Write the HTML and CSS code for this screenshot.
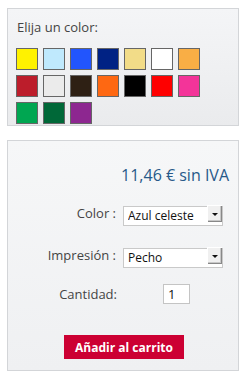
FILE: index.html
```html
<!DOCTYPE html>
<html lang="es">
<head>
  <meta charset="UTF-8" />
  <meta name="viewport" content="width=device-width, initial-scale=1.0"/>
  <title>Elija un color</title>
  <link rel="stylesheet" href="styles.css">
</head>
<body>
  <div class="panel colors">
    <div class="colors-title">Elija un color:</div>
    <div class="swatches">
      <span class="swatch" style="background:#fff200"></span>
      <span class="swatch" style="background:#bfe9fd"></span>
      <span class="swatch" style="background:#2255fd"></span>
      <span class="swatch" style="background:#002284"></span>
      <span class="swatch" style="background:#f2dc88"></span>
      <span class="swatch" style="background:#ffffff"></span>
      <span class="swatch" style="background:#f9ae45"></span>
      <span class="swatch" style="background:#bc1d2b"></span>
      <span class="swatch" style="background:#ebebeb"></span>
      <span class="swatch" style="background:#2e2014"></span>
      <span class="swatch" style="background:#fe6812"></span>
      <span class="swatch" style="background:#000000"></span>
      <span class="swatch" style="background:#fe0000"></span>
      <span class="swatch" style="background:#f33499"></span>
      <span class="swatch" style="background:#00a651"></span>
      <span class="swatch" style="background:#006838"></span>
      <span class="swatch" style="background:#8d2790"></span>
    </div>
  </div>

  <div class="panel buy">
    <div class="price">11,46 € sin IVA</div>

    <div class="row">
      <label class="row-label" for="color">Color :</label>
      <div class="select-wrap">
        <select id="color" class="select">
          <option>Azul celeste</option>
        </select>
        <span class="select-arrow"></span>
      </div>
    </div>

    <div class="row row-print">
      <label class="row-label" for="print">Impresión :</label>
      <div class="select-wrap">
        <select id="print" class="select">
          <option>Pecho</option>
        </select>
        <span class="select-arrow"></span>
      </div>
    </div>

    <div class="row row-qty">
      <label class="row-label" for="qty">Cantidad:</label>
      <input type="text" id="qty" class="qty" value="1" />
    </div>

    <button type="button" class="add-btn">Añadir al carrito</button>
  </div>
</body>
</html>
```

FILE: styles.css
```css
* {
  box-sizing: border-box;
  font-family: 'Open Sans', 'Noto Sans', sans-serif;
}

body {
  margin: 0;
  padding: 8px 11px 0 7px;
  background: #fff;
  color: #444;
}

.panel {
  border: 1px solid #d3d5d8;
  background: linear-gradient(to bottom, #f4f5f7, #eaebed);
}

.colors {
  height: 118px;
  padding: 9px 8px 0 8px;
}

.colors-title {
  font-size: 13px;
  line-height: 18px;
  color: #444;
  margin-bottom: 12px;
  padding-left: 1px;
}

.swatches {
  display: grid;
  grid-template-columns: repeat(7, 22px);
  gap: 5px;
}

.swatch {
  display: block;
  width: 22px;
  height: 22px;
  border: 1px solid #666;
}

.buy {
  margin-top: 14px;
  height: 231px;
  padding: 24px 9px 0 0;
  background: linear-gradient(to bottom, #f6f7f8, #eff0f2);
  display: flex;
  flex-direction: column;
}

.price {
  text-align: right;
  font-size: 16px;
  line-height: 20px;
  color: #275989;
}

.row {
  display: flex;
  align-items: center;
  margin-top: 18px;
  height: 20px;
}

.row-print {
  margin-top: 22px;
}

.row-qty {
  margin-top: 19px;
}

.row-label {
  width: 108px;
  text-align: right;
  font-size: 13px;
  color: #444;
  margin-right: 7px;
}

.select-wrap {
  position: relative;
  width: 100px;
  height: 20px;
}

.select {
  appearance: none;
  width: 100%;
  height: 20px;
  margin: 0;
  padding: 0 0 0 4px;
  border: 1px solid #c9c9c9;
  border-radius: 0;
  background: #fff;
  font-size: 12px;
  color: #111;
}

.select-arrow {
  position: absolute;
  top: 2px;
  right: 1px;
  width: 15px;
  height: 17px;
  background: #f0f0f0;
  border-left: 1px solid #fff;
  border-top: 1px solid #fff;
  box-shadow: inset -1px -1px 0 #888, inset -2px -2px 0 #c8c8c8;
}

.select-arrow::after {
  content: '';
  position: absolute;
  left: 4px;
  top: 7px;
  border-left: 3px solid transparent;
  border-right: 3px solid transparent;
  border-top: 3px solid #111;
}

.row-qty .row-label {
  width: 109px;
  margin-right: 46px;
}

.qty {
  width: 27px;
  height: 20px;
  margin: 0;
  padding: 0 0 0 4px;
  border: 1px solid #c4c4c4;
  font-size: 13px;
  color: #111;
}

.add-btn {
  align-self: flex-start;
  margin: 31px 0 0 56px;
  width: 120px;
  height: 24px;
  border: none;
  background: #cc0033;
  color: #fff;
  font-size: 12px;
  font-weight: bold;
  cursor: pointer;
}
```
